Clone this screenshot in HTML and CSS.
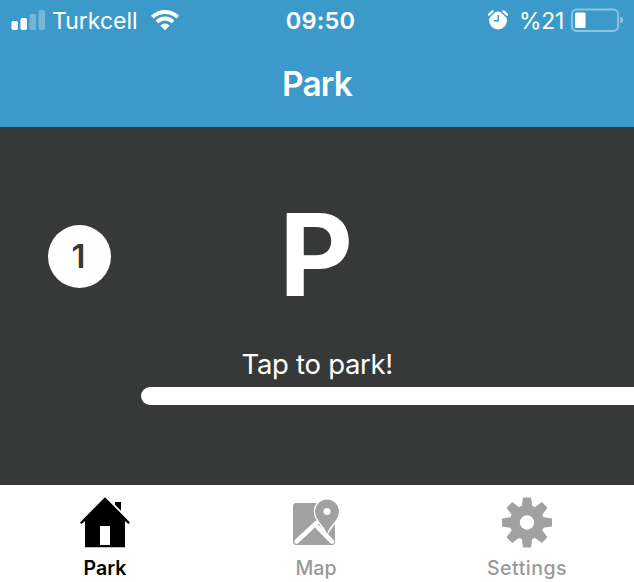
FILE: index.html
```html
<!DOCTYPE html>
<html lang="en">
<head>
<meta charset="utf-8">
<title>Park</title>
<link rel="stylesheet" href="styles.css">
</head>
<body>
<div class="app">
  <header class="header">
    <div class="status">
      <div class="status-left">
        <svg class="signal" width="34" height="20" viewBox="0 0 34 20" fill="#fff">
          <rect x="0.5" y="11" width="6.5" height="9" rx="1.8"/>
          <rect x="9.5" y="8" width="6.5" height="12" rx="1.8"/>
          <rect x="18.5" y="4" width="6.5" height="16" rx="1.8" opacity=".28"/>
          <rect x="27.5" y="0" width="6.5" height="20" rx="1.8" opacity=".28"/>
        </svg>
        <span class="carrier">Turkcell</span>
        <svg class="wifi" width="28" height="21" viewBox="0 0 28 21">
          <g fill="none" stroke="#fff" stroke-width="3.9">
            <path d="M1.3 7.1Q6.7 2 14 2Q21.300 2 26.700 7.100"/>
            <path d="M5.900 12Q9.300 8.500 14 8.500Q18.700 8.500 22.100 12"/>
          </g>
          <path d="M9.300 15.400Q14 11.700 18.700 15.400L14 20.200Z" fill="#fff"/>
        </svg>
      </div>
      <time class="clock">09:50</time>
      <div class="status-right">
        <svg class="alarm" width="20" height="20" viewBox="0 0 20 20">
          <circle cx="10" cy="10.500" r="9" fill="#fff"/>
          <path d="M10.300 5V10.800H5.800" fill="none" stroke="#3c9aca" stroke-width="1.500"/>
          <path d="M1 4.700L4.500 1.400M19 4.700L15.500 1.400" stroke="#fff" stroke-width="2.400" stroke-linecap="round"/>
          <path d="M1.200 7.300L6.700 1.900M18.800 7.300L13.300 1.900" stroke="#3c9aca" stroke-width="1.200"/>
        </svg>
        <span class="percent">%21</span>
        <svg class="battery" width="53" height="24" viewBox="0 0 53 24">
          <rect x="1" y="1.500" width="46" height="21.500" rx="4.500" fill="none" stroke="#fff" stroke-opacity=".42" stroke-width="1.900"/>
          <rect x="4" y="4.500" width="10.500" height="15.500" rx="1.300" fill="#fff"/>
          <path d="M49.200 8.500Q52.200 9.500 52.200 12T49.200 15.500Z" fill="#fff" opacity=".42"/>
        </svg>
      </div>
    </div>
    <h1 class="title">Park</h1>
  </header>
  <main class="stage">
    <div class="step">1</div>
    <div class="prompt">
      <div class="letter">P</div>
      <div class="hint">Tap to park!</div>
    </div>
    <div class="bar"></div>
  </main>
  <nav class="tabs">
    <a class="tab active">
      <svg width="52" height="52" viewBox="0 0 52 52" fill="#000">
        <path d="M26 1.200L51 26.400L49.300 28.100L46 25V51.200H6V25L2.700 28.100L1 26.400Z"/>
        <path d="M36 6H42V14.800L36 8.800Z"/>
        <rect x="21" y="30" width="10" height="19" fill="#fff"/>
      </svg>
      <span>Park</span>
    </a>
    <a class="tab">
      <svg width="52" height="52" viewBox="0 0 52 52">
        <rect x="3" y="7" width="42" height="42" rx="3.500" fill="#a1a1a1"/>
        <path d="M6.500 45.500L26.500 27M28 31.500L42 45.500" fill="none" stroke="#fff" stroke-width="4.600" stroke-linecap="round"/>
        <path d="M37 40.300C33.800 32 23.700 24.500 23.700 15.500A13.300 13.300 0 0 1 50.300 15.500C50.300 24.500 40.200 32 37 40.300Z" fill="#fff"/>
        <path d="M37 38C34.700 30 25 24 25 15.500A12 12 0 0 1 49 15.500C49 24 39.300 30 37 38Z" fill="#a1a1a1"/>
        <circle cx="37" cy="15.500" r="3.500" fill="#fff"/>
      </svg>
      <span>Map</span>
    </a>
    <a class="tab">
      <svg width="52" height="52" viewBox="0 0 52 52" fill="#a1a1a1">
        <g transform="translate(0 .5)">
          <g id="teeth">
            <path id="tooth" d="M20.300 13L22 1H30L31.700 13Z"/>
            <use href="#tooth" transform="rotate(45 26 26)"/>
            <use href="#tooth" transform="rotate(90 26 26)"/>
            <use href="#tooth" transform="rotate(135 26 26)"/>
          </g>
          <use href="#teeth" transform="rotate(180 26 26)"/>
          <circle cx="26" cy="26" r="17.300"/>
          <circle cx="26" cy="26" r="7.200" fill="#fff"/>
        </g>
      </svg>
      <span class="wide">Settings</span>
    </a>
  </nav>
</div>
</body>
</html>
```
FILE: styles.css
```css
* { box-sizing: border-box; }
body { margin: 0; font-family: Inter, "Liberation Sans", sans-serif; }
.app {
  width: 634px;
  height: 582px;
  display: grid;
  grid-template-rows: 126.500px 358.500px 97px;
  overflow: hidden;
}
svg { display: block; flex: none; }
.header { background: #3c9aca; color: #fff; }
.status {
  height: 40px;
  padding: 0 10px 0 11px;
  display: grid;
  grid-template-columns: 1fr auto 1fr;
  align-items: center;
}
.status-left, .status-right { display: flex; align-items: center; }
.status-right { justify-content: flex-end; }
.carrier { margin-left: 7px; padding-top: 1px; width: 87px; font-size: 23px; }
.wifi { margin-left: 12px; }
.clock { margin-left: 6px; padding-top: 1px; font-size: 23.500px; font-weight: 600; letter-spacing: 0.2px; }
.percent { margin: 0 8px 0 11px; padding-top: 1px; width: 44px; font-size: 23px; letter-spacing: -0.3px; }
.title {
  margin: 23px 0 0;
  font-size: 33.500px;
  line-height: 42px;
  font-weight: 600;
  letter-spacing: -0.8px;
  text-align: center;
}
.stage {
  background: #373838;
  color: #fff;
  display: grid;
  grid-template-columns: 140.500px 1fr 140px;
  grid-template-rows: 260.500px 18px;
}
.step {
  width: 63px;
  height: 63px;
  margin: 98px 0 0 48px;
  padding-right: 2px;
  border-radius: 50%;
  background: #fff;
  color: #373838;
  font-size: 33px;
  font-weight: 600;
  line-height: 63px;
  text-align: center;
}
.prompt { text-align: center; }
.letter { margin: 72.500px 2px 0 0; font-size: 114px; line-height: 112px; font-weight: 700; }
.hint { margin-top: 35px; font-size: 27.500px; line-height: 36px; letter-spacing: -0.3px; }
.bar { grid-column: 2 / 4; background: #fff; border-radius: 9px 0 0 9px; }
.tabs { background: #fff; display: grid; grid-template-columns: repeat(3, 211px); }
.tab {
  display: flex;
  flex-direction: column;
  align-items: center;
  padding: 11px 1px 0 0;
  color: #999;
  font-size: 19.500px;
  font-weight: 500;
  line-height: 24px;
}
.tab span { margin-top: 8px; }
.tab .wide { letter-spacing: 0.5px; }
.active { color: #000; font-weight: 600; }
```
